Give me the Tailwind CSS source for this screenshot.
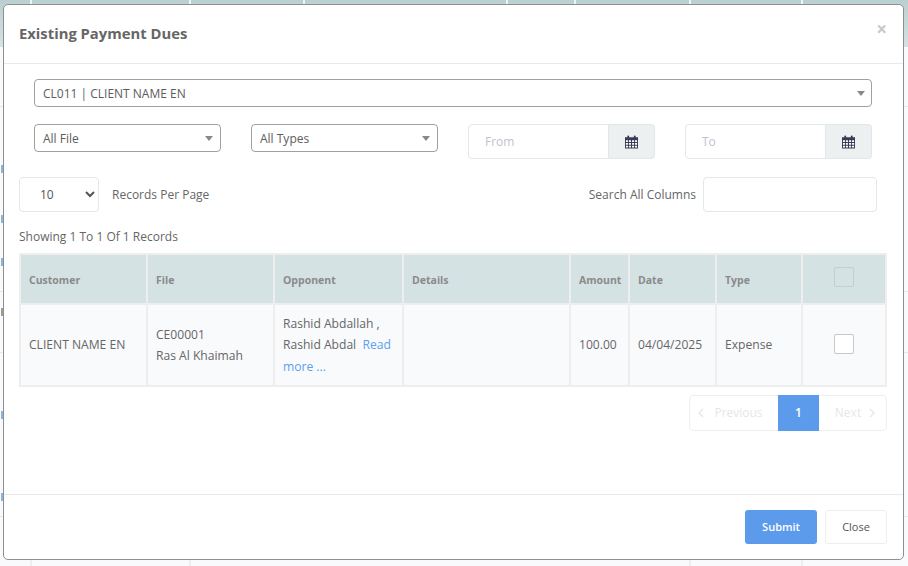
<!DOCTYPE html>
<html lang="en">
<head>
  <meta charset="UTF-8" />
  <title>Existing Payment Dues</title>
  <script src="https://cdn.jsdelivr.net/npm/@tailwindcss/browser@4"></script>
</head>
<body class="h-[566px] w-[908px] overflow-hidden bg-[#f8fafb] font-['Open_Sans',sans-serif] text-[12px] text-[#666]">

  <!-- page behind the modal -->
  <div class="relative h-[566px] w-[908px] overflow-hidden">
    <div class="grid h-[47px] grid-cols-[32px_159px_114px_203px_68px_115px_112px_1fr] bg-gradient-to-b from-[#b9d0d1] to-[#d4e2e4]">
      <div class="border-r-2 border-[#eef2f3]"></div>
      <div class="border-r-2 border-[#eef2f3]"></div>
      <div class="border-r-2 border-[#eef2f3]"></div>
      <div class="border-r-2 border-[#eef2f3]"></div>
      <div class="border-r-2 border-[#eef2f3]"></div>
      <div class="border-r-2 border-[#eef2f3]"></div>
      <div class="border-r-2 border-[#eef2f3]"></div>
      <div></div>
    </div>
    <div class="h-[60px] border-b border-[#e8e8e8]"></div>
    <div class="h-[185px] border-b border-[#e8e8e8]"></div>
    <div class="h-[61px] border-b border-[#e8e8e8]"></div>
    <div class="h-[164px] border-b border-[#e8e8e8]"></div>
    <div class="grid h-[49px] grid-cols-[32px_159px_500px_112px_1fr]">
      <div class="border-r-2 border-[#eeeeee]"></div>
      <div class="border-r-2 border-[#eeeeee]"></div>
      <div class="border-r-2 border-[#eeeeee]"></div>
      <div class="border-r-2 border-[#eeeeee]"></div>
      <div></div>
    </div>
    <!-- bits of row text showing left of the modal -->
    <div class="absolute left-[1px] top-[165px] h-[8px] w-[2px] bg-[#8fb4da]"></div>
    <div class="absolute left-[1px] top-[215px] h-[8px] w-[2px] bg-[#8fb4da]"></div>
    <div class="absolute left-[1px] top-[258px] h-[8px] w-[2px] bg-[#8fb4da]"></div>
    <div class="absolute left-[1px] top-[308px] h-[8px] w-[2px] bg-[#a89a8c]"></div>
    <div class="absolute left-[1px] top-[411px] h-[8px] w-[2px] bg-[#8fb4da]"></div>
    <div class="absolute left-[1px] top-[493px] h-[8px] w-[2px] bg-[#8fb4da]"></div>
  </div>

  <!-- modal -->
  <div class="absolute left-[3px] top-[4px] flex h-[556px] w-[901px] flex-col rounded-[5px] border border-[#8f8f8f] bg-white">
    <div class="relative h-[59px] shrink-0 border-b border-[#e9e9e9] pl-[15px] pt-[18px]">
      <h4 class="text-[14.8px] leading-5 font-bold text-[#666]">Existing Payment Dues</h4>
      <button class="absolute right-[16px] top-[12px] text-[19px] leading-6 font-bold text-[#c9c9c9]">×</button>
    </div>

    <div class="flex-1 pl-[15px] pr-[16px]">
      <div class="px-[15px] pt-[15px]">
        <div class="flex h-[28px] items-center justify-between rounded-[4px] border border-[#a0a0a0] pl-[8px] pr-[6px] pt-[1px] text-[#5c5c5c]">
          <span>CL011 | CLIENT NAME EN</span>
          <span class="h-0 w-0 border-x-[4px] border-t-[5px] border-x-transparent border-t-[#888]"></span>
        </div>

        <div class="mt-[17px] flex h-[35px] items-start">
          <div class="flex h-[28px] w-[187px] items-center justify-between rounded-[4px] border border-[#a0a0a0] pl-[8px] pr-[7px] pt-[1px] text-[#5c5c5c]">
            <span>All File</span>
            <span class="h-0 w-0 border-x-[4px] border-t-[5px] border-x-transparent border-t-[#888]"></span>
          </div>
          <div class="ml-[30px] flex h-[28px] w-[187px] items-center justify-between rounded-[4px] border border-[#a0a0a0] pl-[8px] pr-[7px] pt-[1px] text-[#5c5c5c]">
            <span>All Types</span>
            <span class="h-0 w-0 border-x-[4px] border-t-[5px] border-x-transparent border-t-[#888]"></span>
          </div>
          <div class="ml-[30px] flex h-[35px] w-[187px]">
            <div class="flex flex-1 items-center rounded-l-[4px] border border-[#e1e8ea] pl-[16px] text-[#c3bfcc]">From</div>
            <div class="flex w-[46px] items-center justify-center rounded-r-[4px] border border-l-0 border-[#e1e8ea] bg-[#ecf0f1] pr-[1px]">
              <svg width="13" height="14" viewBox="0 0 14 14"><path fill="#3b3a57" d="M0 2h2.5V1a1 1 0 0 1 2 0v1h5V1a1 1 0 0 1 2 0v1H14v12H0z"/><path fill="#fff" d="M1 5h2.2v2H1zM4.2 5h2.2v2H4.2zM7.6 5h2.2v2H7.6zM10.8 5H13v2h-2.2zM1 8h2.2v2H1zM4.2 8h2.2v2H4.2zM7.6 8h2.2v2H7.6zM10.8 8H13v2h-2.2zM1 11h2.2v2H1zM4.2 11h2.2v2H4.2zM7.6 11h2.2v2H7.6zM10.8 11H13v2h-2.2z"/></svg>
            </div>
          </div>
          <div class="ml-[30px] flex h-[35px] w-[187px]">
            <div class="flex flex-1 items-center rounded-l-[4px] border border-[#e1e8ea] pl-[16px] text-[#c3bfcc]">To</div>
            <div class="flex w-[46px] items-center justify-center rounded-r-[4px] border border-l-0 border-[#e1e8ea] bg-[#ecf0f1] pr-[1px]">
              <svg width="13" height="14" viewBox="0 0 14 14"><path fill="#3b3a57" d="M0 2h2.5V1a1 1 0 0 1 2 0v1h5V1a1 1 0 0 1 2 0v1H14v12H0z"/><path fill="#fff" d="M1 5h2.2v2H1zM4.2 5h2.2v2H4.2zM7.6 5h2.2v2H7.6zM10.8 5H13v2h-2.2zM1 8h2.2v2H1zM4.2 8h2.2v2H4.2zM7.6 8h2.2v2H7.6zM10.8 8H13v2h-2.2zM1 11h2.2v2H1zM4.2 11h2.2v2H4.2zM7.6 11h2.2v2H7.6zM10.8 11H13v2h-2.2z"/></svg>
            </div>
          </div>
        </div>
      </div>

      <div class="mt-[18px] flex h-[35px] items-center pr-[10px]">
        <select class="h-[35px] w-[80px] rounded-[4px] border border-[#e1e8ea] bg-white pl-[16px] text-[12px] text-[#555]">
          <option>10</option>
        </select>
        <span class="ml-[13px]">Records Per Page</span>
        <span class="ml-auto">Search All Columns</span>
        <div class="ml-[7px] h-[35px] w-[174px] rounded-[4px] border border-[#e1e8ea]"></div>
      </div>

      <div class="mt-[16px] h-[18px] leading-[18px]">Showing 1 To 1 Of 1 Records</div>

      <table class="mt-[7px] w-[866px] table-fixed border-collapse border-2 border-[#eeeeee]">
        <colgroup>
          <col class="w-[127px]" /><col class="w-[127px]" /><col class="w-[129px]" /><col class="w-[167px]" />
          <col class="w-[59px]" /><col class="w-[87px]" /><col class="w-[86px]" /><col class="w-[84px]" />
        </colgroup>
        <thead>
          <tr class="h-[50px] bg-[#d4e2e4] text-left text-[10.5px] font-bold text-[#8a8a8a]">
            <th class="border-2 border-[#eeeeee] pl-[8px] pt-[4px]">Customer</th>
            <th class="border-2 border-[#eeeeee] pl-[8px] pt-[4px]">File</th>
            <th class="border-2 border-[#eeeeee] pl-[8px] pt-[4px]">Opponent</th>
            <th class="border-2 border-[#eeeeee] pl-[8px] pt-[4px]">Details</th>
            <th class="border-2 border-[#eeeeee] pl-[8px] pt-[4px]">Amount</th>
            <th class="border-2 border-[#eeeeee] pl-[8px] pt-[4px]">Date</th>
            <th class="border-2 border-[#eeeeee] pl-[8px] pt-[4px]">Type</th>
            <th class="border-2 border-[#eeeeee]"><div class="mx-auto mb-[4px] h-[20px] w-[20px] rounded-[2px] border border-[#c4cfd1]"></div></th>
          </tr>
        </thead>
        <tbody>
          <tr class="h-[82px] bg-[#f9fafc] text-[12.1px] text-[#666]">
            <td class="border-2 border-[#eeeeee] pl-[8px]">CLIENT NAME EN</td>
            <td class="border-2 border-[#eeeeee] pl-[8px] leading-[21px]">CE00001<br />Ras Al Khaimah</td>
            <td class="border-2 border-[#eeeeee] pl-[8px] leading-[21.5px]">Rashid Abdallah , Rashid Abdal&nbsp; <a class="text-[#5c9fef]">Read more ...</a></td>
            <td class="border-2 border-[#eeeeee]"></td>
            <td class="border-2 border-[#eeeeee] pl-[8px]">100.00</td>
            <td class="border-2 border-[#eeeeee] pl-[8px]">04/04/2025</td>
            <td class="border-2 border-[#eeeeee] pl-[8px]">Expense</td>
            <td class="border-2 border-[#eeeeee]"><div class="mx-auto mb-[2px] h-[20px] w-[20px] rounded-[2px] border border-[#c8c8c8] bg-white"></div></td>
          </tr>
        </tbody>
      </table>

      <div class="mt-[8px] flex justify-end">
        <div class="flex h-[36px] w-[198px] rounded-[4px] border border-[#eeeeee] text-[#e3e8ea]">
          <div class="flex w-[88px] items-center justify-center gap-[10px] pr-[7px]">
            <svg width="6" height="10" viewBox="0 0 6 10"><path d="M5 1 1 5l4 4" fill="none" stroke="#e3e8ea" stroke-width="1.4"/></svg>
            <span>Previous</span>
          </div>
          <div class="-my-px flex w-[41px] items-center justify-center bg-[#5c9bec] font-semibold text-white">1</div>
          <div class="flex flex-1 items-center justify-center gap-[8px] pl-[5px]">
            <span>Next</span>
            <svg width="6" height="10" viewBox="0 0 6 10"><path d="m1 1 4 4-4 4" fill="none" stroke="#e3e8ea" stroke-width="1.4"/></svg>
          </div>
        </div>
      </div>
    </div>

    <div class="flex h-[65px] shrink-0 items-start justify-end gap-[8px] border-t border-[#e9e9e9] pr-[16px] pt-[15px]">
      <button class="h-[34px] w-[72px] rounded-[3px] bg-[#5c9bec] text-[11px] font-semibold text-white">Submit</button>
      <button class="h-[34px] w-[62px] rounded-[3px] border border-[#eeeeee] bg-white text-[11px] text-[#555]">Close</button>
    </div>
  </div>

</body>
</html>
